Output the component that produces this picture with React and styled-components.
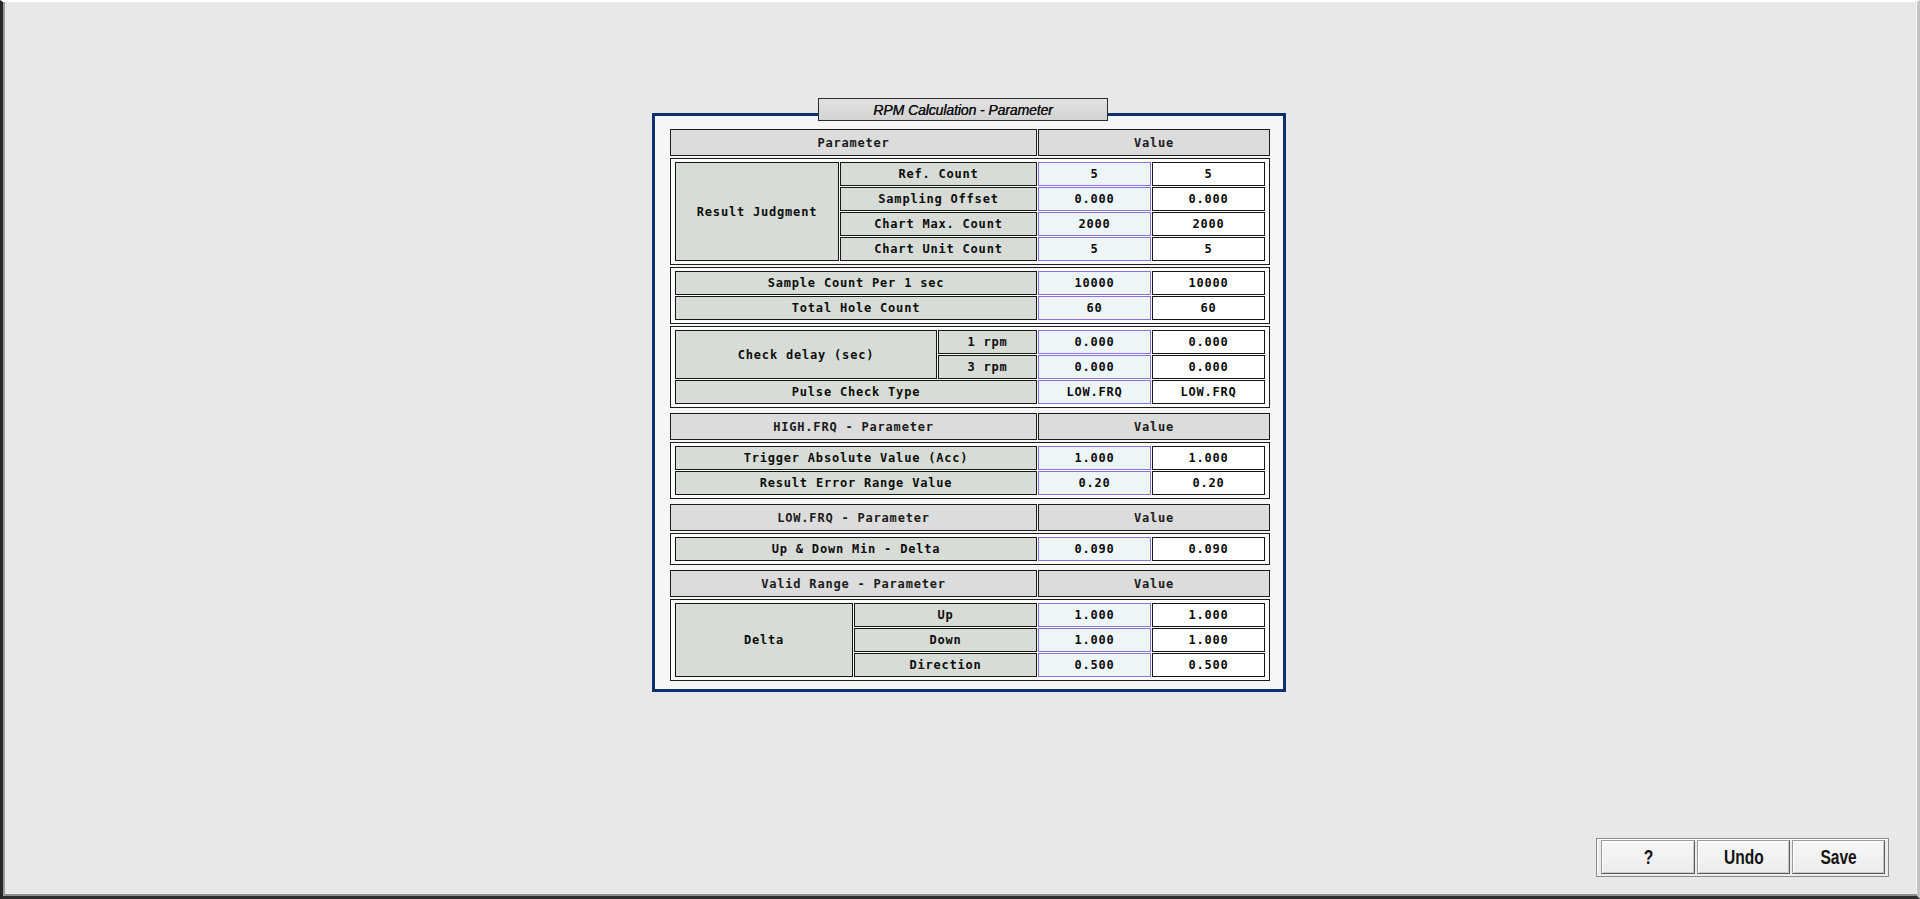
import React from "react";
import styled, { createGlobalStyle } from "styled-components";

const GlobalStyle = createGlobalStyle`
  html, body {
    margin: 0;
    padding: 0;
    background: #e8e8e8;
  }
`;

const Screen = styled.div`
  width: 1920px;
  height: 899px;
  box-sizing: border-box;
  display: flex;
  flex-direction: column;
  background: #e8e8e8;
  border-top: 2px solid #ffffff;
  border-left: 3px solid #262626;
  border-bottom: 3px solid #2e2e2e;
  border-right: 3px solid #c4c4c4;
  box-shadow: inset 2px 0 0 #9a9a9a, inset 0 -2px 0 #8e8e8e, inset -1px 0 0 #f8f8f8;
  overflow: hidden;
`;

const Stage = styled.div`
  flex: 1;
  padding: 96px 0 0 649px;
`;

const Window = styled.div`
  width: 634px;
  display: flex;
  flex-direction: column;
`;

const Title = styled.div`
  position: relative;
  z-index: 1;
  width: 290px;
  height: 23px;
  margin: 0 0 -8px 166px;
  box-sizing: border-box;
  border: 1px solid #2c2c2c;
  background: linear-gradient(#e2e2e2, #d2d2d2);
  display: flex;
  align-items: center;
  justify-content: center;
  font-family: "Liberation Sans", Arial, sans-serif;
  font-style: italic;
  font-size: 14px;
  letter-spacing: -0.1px;
  color: #111;
  text-shadow: 0.3px 0 0 #111;
`;

const Panel = styled.div`
  box-sizing: border-box;
  width: 634px;
  border: 3px solid #0e2f70;
  background: #f4f6f7;
  padding: 13px 13px 8px 15px;
  display: flex;
  flex-direction: column;
  gap: 2px;
`;

const HeaderRow = styled.div`
  display: grid;
  grid-template-columns: 367px 232px;
  column-gap: 1px;
  height: 27px;

  &:not(:first-child) {
    margin-top: 3px;
  }
`;

const HeaderCell = styled.div`
  box-sizing: border-box;
  border: 1px solid #1c1c1c;
  background: #dcdcdc;
  display: flex;
  align-items: center;
  justify-content: center;
  font-family: "DejaVu Sans Mono", monospace;
  font-weight: bold;
  font-size: 12px;
  letter-spacing: 0.8px;
  color: #1a1a1a;
`;

const Group = styled.div`
  display: grid;
  grid-template-columns: ${(p) => p.$cols};
  grid-auto-rows: 24px;
  gap: 1px;
  padding: 3px 4px;
  border: 1px solid #1c1c1c;
  background: #fdfdfd;
`;

const Cell = styled.div`
  box-sizing: border-box;
  display: flex;
  align-items: center;
  justify-content: center;
  font-family: "DejaVu Sans Mono", monospace;
  font-weight: bold;
  font-size: 12px;
  letter-spacing: 0.8px;
  color: #0c0c0c;
  white-space: nowrap;
`;

const Label = styled(Cell)`
  grid-row: span ${(p) => p.$rowSpan || 1};
  grid-column: span ${(p) => p.$colSpan || 1};
  border: 1px solid #161616;
  background: #d7ddd6;
`;

const Value = styled(Cell)`
  border: 1px solid ${(p) => (p.$current ? "#8a72dc" : "#161616")};
  background: ${(p) => (p.$current ? "#eef5f6" : "#ffffff")};
`;

const Footer = styled.div`
  display: flex;
  justify-content: flex-end;
  padding: 0 28px 19px 0;
`;

const ButtonBar = styled.div`
  display: flex;
  gap: 2px;
  padding: 1px 3px 2px 4px;
  border: 1px solid #8a8a8a;
  background: #ececec;
  box-shadow: inset 1px 1px 0 #ffffff;
`;

const Button = styled.button`
  width: ${(p) => p.$w || 93}px;
  height: 34px;
  box-sizing: border-box;
  padding: 0;
  border: 1px solid #5c5c5c;
  border-top-color: #9a9a9a;
  border-left-color: #9a9a9a;
  background: linear-gradient(#f7f7f7, #ececec);
  box-shadow: inset 1px 1px 0 #ffffff, inset -1px -1px 0 #c8c8c8;
  cursor: pointer;
`;

const ButtonText = styled.span`
  display: inline-block;
  font-family: "Liberation Sans", sans-serif;
  font-weight: bold;
  font-size: 21px;
  color: #141414;
  transform: scaleX(0.74);
`;

const Row = ({ name, value }) => (
  <>
    <Label>{name}</Label>
    <Value $current>{value}</Value>
    <Value>{value}</Value>
  </>
);

const PAIR = "362px 113px 113px";

export default function App() {
  return (
    <>
      <GlobalStyle />
      <Screen>
        <Stage>
          <Window>
            <Title>RPM Calculation - Parameter</Title>
            <Panel>
              <HeaderRow>
                <HeaderCell>Parameter</HeaderCell>
                <HeaderCell>Value</HeaderCell>
              </HeaderRow>
              <Group $cols="164px 197px 113px 113px">
                <Label $rowSpan={4}>Result Judgment</Label>
                <Row name="Ref. Count" value="5" />
                <Row name="Sampling Offset" value="0.000" />
                <Row name="Chart Max. Count" value="2000" />
                <Row name="Chart Unit Count" value="5" />
              </Group>
              <Group $cols={PAIR}>
                <Row name="Sample Count Per 1 sec" value="10000" />
                <Row name="Total Hole Count" value="60" />
              </Group>
              <Group $cols="262px 99px 113px 113px">
                <Label $rowSpan={2}>Check delay (sec)</Label>
                <Row name="1 rpm" value="0.000" />
                <Row name="3 rpm" value="0.000" />
                <Label $colSpan={2}>Pulse Check Type</Label>
                <Value $current>LOW.FRQ</Value>
                <Value>LOW.FRQ</Value>
              </Group>

              <HeaderRow>
                <HeaderCell>HIGH.FRQ - Parameter</HeaderCell>
                <HeaderCell>Value</HeaderCell>
              </HeaderRow>
              <Group $cols={PAIR}>
                <Row name="Trigger Absolute Value (Acc)" value="1.000" />
                <Row name="Result Error Range Value" value="0.20" />
              </Group>

              <HeaderRow>
                <HeaderCell>LOW.FRQ - Parameter</HeaderCell>
                <HeaderCell>Value</HeaderCell>
              </HeaderRow>
              <Group $cols={PAIR}>
                <Row name="Up &amp; Down Min - Delta" value="0.090" />
              </Group>

              <HeaderRow>
                <HeaderCell>Valid Range - Parameter</HeaderCell>
                <HeaderCell>Value</HeaderCell>
              </HeaderRow>
              <Group $cols="178px 183px 113px 113px">
                <Label $rowSpan={3}>Delta</Label>
                <Row name="Up" value="1.000" />
                <Row name="Down" value="1.000" />
                <Row name="Direction" value="0.500" />
              </Group>
            </Panel>
          </Window>
        </Stage>
        <Footer>
          <ButtonBar>
            <Button $w={94}><ButtonText>?</ButtonText></Button>
            <Button><ButtonText>Undo</ButtonText></Button>
            <Button><ButtonText>Save</ButtonText></Button>
          </ButtonBar>
        </Footer>
      </Screen>
    </>
  );
}
